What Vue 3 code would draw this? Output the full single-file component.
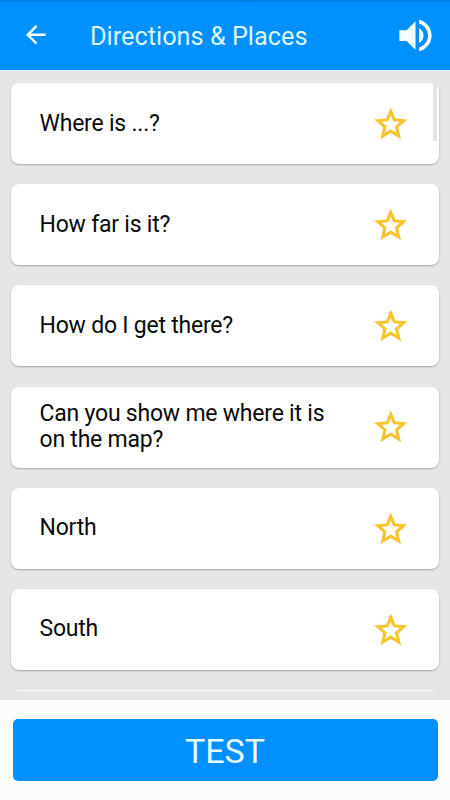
<template>
  <div class="screen">
    <!-- Toolbar -->
    <header class="toolbar">
      <svg class="icon-back" viewBox="0 0 24 24">
        <path d="M20 11H7.83l5.59-5.59L12 4l-8 8 8 8 1.41-1.41L7.83 13H20v-2z" />
      </svg>
      <h1 class="title">Directions &amp; Places</h1>
      <svg class="icon-sound" viewBox="0 0 24 24">
        <path d="M3 9v6h4l5 5V4L7 9H3zm13.5 3c0-1.77-1.02-3.29-2.5-4.03v8.05c1.48-.73 2.5-2.25 2.5-4.02zM14 3.23v2.06c2.89.86 5 3.54 5 6.71s-2.11 5.85-5 6.71v2.06c4.01-.91 7-4.49 7-8.77s-2.99-7.86-7-8.77z" />
      </svg>
    </header>

    <!-- Phrase list -->
    <main class="list-area">
      <div class="list">
        <div
          v-for="phrase in phrases"
          :key="phrase.id"
          class="card"
          @click="selectPhrase(phrase)"
        >
          <span class="phrase">{{ phrase.text }}</span>
          <svg
            class="star"
            :class="{ filled: phrase.favorite }"
            viewBox="0 0 32 32"
            @click.stop="toggleFavorite(phrase)"
          >
            <path d="M16 4.2l3.4 8 8.9.9-6.7 5.9 2 8.7-7.6-4.6-7.6 4.6 2-8.7-6.7-5.9 8.9-.9z" />
          </svg>
        </div>
        <div class="card"></div>
      </div>
      <div class="scrollbar"></div>
    </main>

    <footer class="footer">
      <button class="test-button">TEST</button>
    </footer>
  </div>
</template>

<script setup>
import { ref } from 'vue'

const phrases = ref([
  { id: 1, text: 'Where is ...?', favorite: false },
  { id: 2, text: 'How far is it?', favorite: false },
  { id: 3, text: 'How do I get there?', favorite: false },
  { id: 4, text: 'Can you show me where it is on the map?', favorite: false },
  { id: 5, text: 'North', favorite: false },
  { id: 6, text: 'South', favorite: false }
])

const selectedId = ref(null)

function selectPhrase(phrase) {
  selectedId.value = phrase.id
}

function toggleFavorite(phrase) {
  phrase.favorite = !phrase.favorite
}
</script>

<style>
body {
  margin: 0;
}
</style>

<style scoped>
.screen {
  display: flex;
  flex-direction: column;
  width: 450px;
  height: 800px;
  overflow: hidden;
  background: #e6e6e5;
  font-family: Roboto, sans-serif;
}

.toolbar {
  display: flex;
  align-items: center;
  flex: none;
  height: 70px;
  padding: 0 13px 0 20.5px;
  box-sizing: border-box;
  background: linear-gradient(#0078d4, #0090ff 3px);
}

.icon-back {
  width: 29.5px;
  height: 29.5px;
  fill: #f4feff;
}

.title {
  flex: 1;
  margin: 3px 0 0 40px;
  font-size: 25.3px;
  font-weight: 400;
  line-height: 30px;
  color: #dcf8ff;
}

.icon-sound {
  width: 43px;
  height: 43px;
  fill: #f4feff;
}

.list-area {
  position: relative;
  flex: none;
  height: 621px;
  margin-bottom: 9px;
  overflow: hidden;
}

.list {
  display: flex;
  flex-direction: column;
  gap: 20.2px;
  padding: 13px 11px 0;
}

.card {
  display: flex;
  align-items: center;
  justify-content: space-between;
  flex: none;
  height: 81px;
  padding: 0 32px 0 28.5px;
  box-sizing: border-box;
  border-radius: 8px;
  background: #fff;
  box-shadow: 0 1px 2px rgba(0, 0, 0, 0.28);
}

.phrase {
  width: 300px;
  font-size: 23px;
  line-height: 26px;
  letter-spacing: -0.22px;
  color: #0a0a0a;
}

.star {
  width: 33.5px;
  height: 33.5px;
  fill: none;
  stroke: #f6c532;
  stroke-width: 3;
}

.star.filled {
  fill: #f6c532;
}

.scrollbar {
  position: absolute;
  top: 13px;
  right: 13px;
  width: 4px;
  height: 58px;
  background: #e4e4e4;
}

.footer {
  flex: 1;
  padding: 19px 12.5px;
  background: #fcfcfb;
}

.test-button {
  display: block;
  width: 100%;
  height: 62px;
  padding: 2px 0 0;
  border: none;
  border-radius: 5px;
  background: #0090ff;
  font-family: inherit;
  font-size: 34px;
  color: #e6faff;
}
</style>
